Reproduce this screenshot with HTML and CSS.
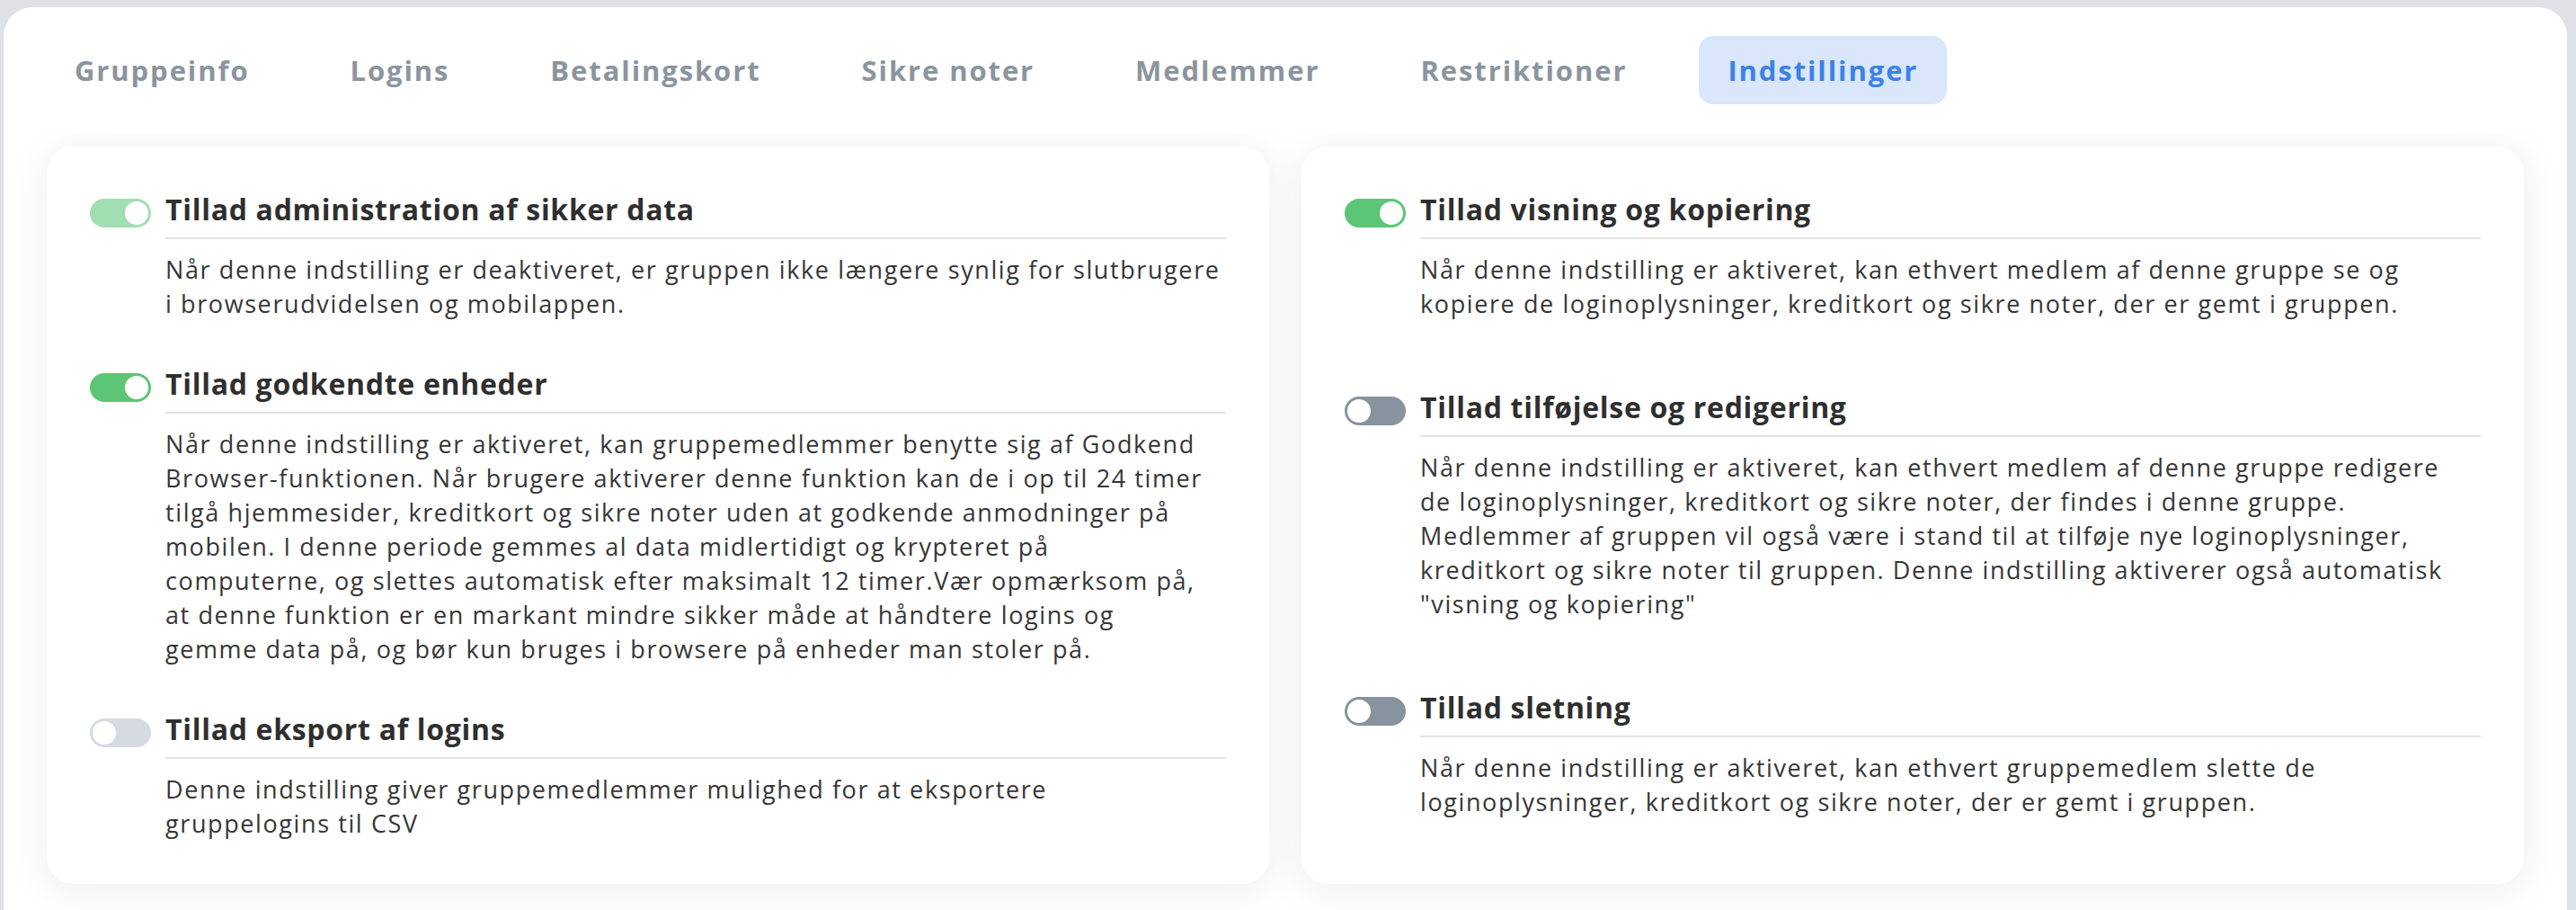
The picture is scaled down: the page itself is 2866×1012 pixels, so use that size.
FILE: index.html
```html
<!DOCTYPE html>
<html lang="da">
<head>
<meta charset="utf-8">
<title>Indstillinger</title>
<link rel="stylesheet" href="styles.css">
</head>
<body>
<div class="panel">
  <nav class="tabs">
    <a class="tab">Gruppeinfo</a>
    <a class="tab">Logins</a>
    <a class="tab">Betalingskort</a>
    <a class="tab">Sikre noter</a>
    <a class="tab">Medlemmer</a>
    <a class="tab">Restriktioner</a>
    <a class="tab active">Indstillinger</a>
  </nav>
  <div class="content">
    <section class="card">
      <div class="setting">
        <span class="toggle on faded"></span>
        <h3 class="setting-title">Tillad administration af sikker data</h3>
        <p class="setting-desc">Når denne indstilling er deaktiveret, er gruppen ikke længere synlig for slutbrugere<br>i browserudvidelsen og mobilappen.</p>
      </div>
      <div class="setting">
        <span class="toggle on"></span>
        <h3 class="setting-title">Tillad godkendte enheder</h3>
        <p class="setting-desc">Når denne indstilling er aktiveret, kan gruppemedlemmer benytte sig af Godkend<br>Browser-funktionen. Når brugere aktiverer denne funktion kan de i op til 24 timer<br>tilgå hjemmesider, kreditkort og sikre noter uden at godkende anmodninger på<br>mobilen. I denne periode gemmes al data midlertidigt og krypteret på<br>computerne, og slettes automatisk efter maksimalt 12 timer.Vær opmærksom på,<br>at denne funktion er en markant mindre sikker måde at håndtere logins og<br>gemme data på, og bør kun bruges i browsere på enheder man stoler på.</p>
      </div>
      <div class="setting">
        <span class="toggle off faded"></span>
        <h3 class="setting-title">Tillad eksport af logins</h3>
        <p class="setting-desc">Denne indstilling giver gruppemedlemmer mulighed for at eksportere<br>gruppelogins til CSV</p>
      </div>
    </section>
    <section class="card card-loose">
      <div class="setting">
        <span class="toggle on"></span>
        <h3 class="setting-title">Tillad visning og kopiering</h3>
        <p class="setting-desc">Når denne indstilling er aktiveret, kan ethvert medlem af denne gruppe se og<br>kopiere de loginoplysninger, kreditkort og sikre noter, der er gemt i gruppen.</p>
      </div>
      <div class="setting">
        <span class="toggle off"></span>
        <h3 class="setting-title">Tillad tilføjelse og redigering</h3>
        <p class="setting-desc">Når denne indstilling er aktiveret, kan ethvert medlem af denne gruppe redigere<br>de loginoplysninger, kreditkort og sikre noter, der findes i denne gruppe.<br>Medlemmer af gruppen vil også være i stand til at tilføje nye loginoplysninger,<br>kreditkort og sikre noter til gruppen. Denne indstilling aktiverer også automatisk<br>"visning og kopiering"</p>
      </div>
      <div class="setting">
        <span class="toggle off"></span>
        <h3 class="setting-title">Tillad sletning</h3>
        <p class="setting-desc">Når denne indstilling er aktiveret, kan ethvert gruppemedlem slette de<br>loginoplysninger, kreditkort og sikre noter, der er gemt i gruppen.</p>
      </div>
    </section>
  </div>
</div>
</body>
</html>
```

FILE: styles.css
```css
html, body {
  margin: 0;
  height: 1012px;
  overflow: hidden;
  background: #dfe1e7;
}

body {
  box-sizing: border-box;
  padding: 8px 10px 0 4px;
  font-family: "Open Sans", "Noto Sans", sans-serif;
  color: #333333;
}

.panel {
  height: 1004px;
  background: #ffffff;
  border-radius: 32px 32px 0 0;
  overflow: hidden;
  display: flex;
  flex-direction: column;
}

.tabs {
  flex-shrink: 0;
  height: 140px;
  box-sizing: border-box;
  padding-left: 47px;
  display: flex;
  align-items: center;
  gap: 48px;
}

.tab {
  height: 76px;
  padding: 0 32px;
  display: flex;
  align-items: center;
  border-radius: 16px;
  font-size: 31px;
  font-weight: 700;
  letter-spacing: 1.9px;
  color: #8a959f;
  white-space: nowrap;
}

.tab.active {
  background: #dae6fa;
  color: #3a82e8;
}

.content {
  flex: 1;
  overflow: hidden;
  display: grid;
  grid-template-columns: 1fr 1fr;
  column-gap: 36px;
  align-content: start;
  padding: 15px 48px 0 48px;
}

.card {
  background: #ffffff;
  border-radius: 30px;
  box-shadow: 0 6px 44px 6px rgba(0, 0, 0, 0.06);
  padding: 50px 48px 48px;
  display: flex;
  flex-direction: column;
  gap: 50px;
}

.card-loose {
  gap: 76px;
}

.setting {
  display: grid;
  grid-template-columns: 68px 1fr;
  column-gap: 16px;
}

.toggle {
  grid-column: 1;
  grid-row: 1;
  margin-top: 8px;
  width: 68px;
  height: 32px;
  border-radius: 16px;
  position: relative;
  background: #5cc576;
}

.toggle::after {
  content: "";
  position: absolute;
  top: 3px;
  width: 26px;
  height: 26px;
  border-radius: 50%;
  background: #ffffff;
}

.toggle.on::after {
  right: 3px;
}

.toggle.off::after {
  left: 3px;
}

.toggle.on.faded {
  background: #a1dfb2;
}

.toggle.off {
  background: #87939e;
}

.toggle.off.faded {
  background: #d5dbe0;
}

.setting-title {
  grid-column: 2;
  grid-row: 1;
  margin: 0;
  font-size: 32px;
  line-height: 40px;
  font-weight: 700;
  letter-spacing: 0.7px;
  color: #2f2f2f;
  padding-bottom: 11px;
  border-bottom: 2px solid #e2e2e2;
}

.setting-desc {
  grid-column: 2;
  grid-row: 2;
  margin: 15px 0 0;
  font-size: 27px;
  line-height: 38px;
  font-weight: 400;
  letter-spacing: 1.6px;
  color: #363636;
  white-space: nowrap;
}
```
